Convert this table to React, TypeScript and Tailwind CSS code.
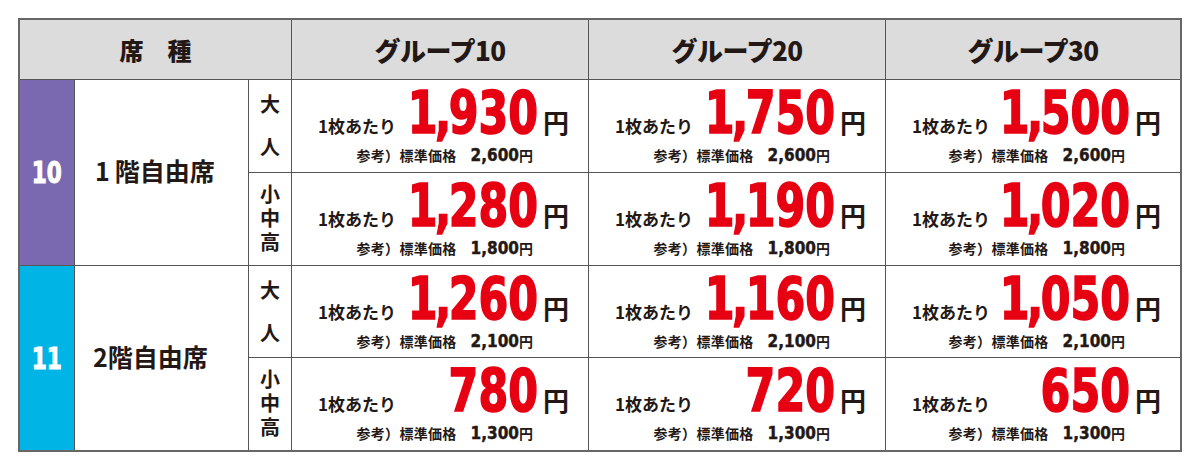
const JP = '"Noto Sans CJK JP", "Noto Sans", sans-serif';
const NUM = '"DejaVu Sans Condensed", "DejaVu Sans", sans-serif';

interface PriceCellProps {
  price: string;
  base: string;
}

function PriceCell({ price, base }: PriceCellProps) {
  const [head, tail] = price.includes(",") ? price.split(",") : ["", price];
  return (
    <div className="flex flex-col justify-center bg-white pb-[4px] text-[#231815]">
      <div className="flex items-baseline whitespace-nowrap pl-[26px] pr-[19px]">
        <span className="shrink-0 text-[17px] font-bold" style={{ fontFamily: JP }}>
          1枚あたり
        </span>
        <span className="flex min-w-0 flex-1 justify-end">
          <span
            className="inline-block origin-right scale-x-[0.82] text-[58px] font-bold leading-none text-[#e60012] [-webkit-text-stroke:1.5px_#e60012]"
            style={{ fontFamily: NUM }}
          >
            {head}
            {head && <span className="-mx-[3px]">,</span>}
            {tail}
          </span>
        </span>
        <span className="ml-[5px] shrink-0 text-[26px] font-bold leading-none" style={{ fontFamily: JP }}>
          円
        </span>
      </div>
      <div className="mt-[4px] flex items-baseline justify-end whitespace-nowrap pr-[55px] leading-[18px]">
        <span className="text-[14px] font-bold tracking-[0.3px]" style={{ fontFamily: JP }}>
          参考）標準価格
        </span>
        <span
          className="ml-[14px] text-[17px] font-bold [-webkit-text-stroke:0.4px_#231815]"
          style={{ fontFamily: NUM }}
        >
          {base}
        </span>
        <span className="text-[14px] font-bold" style={{ fontFamily: JP }}>
          円
        </span>
      </div>
    </div>
  );
}

const rows = [
  { cat: ["大", "人"], prices: ["1,930", "1,750", "1,500"], base: "2,600" },
  { cat: ["小", "中", "高"], prices: ["1,280", "1,190", "1,020"], base: "1,800" },
  { cat: ["大", "人"], prices: ["1,260", "1,160", "1,050"], base: "2,100" },
  { cat: ["小", "中", "高"], prices: ["780", "720", "650"], base: "1,300" },
];

function CategoryCell({ chars }: { chars: string[] }) {
  const two = chars.length === 2;
  return (
    <div
      className={`flex flex-col items-center justify-center bg-white pb-[2px] text-[20px] font-bold text-[#231815] ${
        two ? "gap-[22px] leading-[21px]" : "leading-[24px]"
      }`}
      style={{ fontFamily: JP }}
    >
      {chars.map((c, i) => (
        <span key={i}>{c}</span>
      ))}
    </div>
  );
}

function SeatNo({ no, color }: { no: string; color: string }) {
  return (
    <div className={`row-span-2 flex items-center justify-center ${color}`}>
      <span
        className="inline-block scale-x-[0.8] text-[30px] font-bold text-white [-webkit-text-stroke:1px_#ffffff]"
        style={{ fontFamily: NUM }}
      >
        {no}
      </span>
    </div>
  );
}

export default function App() {
  return (
    <div className="h-[469px] w-[1200px] bg-white pl-[18px] pt-[18px]">
      <div className="grid w-[1164px] grid-cols-[54px_173px_42px_296px_296px_294px] grid-rows-[59px_92px_92px_91px_92px] gap-px border-2 border-[#666666] bg-[#555555]">
        {/* header */}
        <div
          className="col-span-3 flex items-center justify-center bg-[#dcdcdc] text-[24px] font-black text-[#231815]"
          style={{ fontFamily: JP }}
        >
          席　種
        </div>
        {["グループ10", "グループ20", "グループ30"].map((g) => (
          <div
            key={g}
            className="flex items-center justify-center bg-[#dcdcdc] text-[26px] font-black tracking-[-0.5px] text-[#231815]"
            style={{ fontFamily: JP }}
          >
            {g}
          </div>
        ))}

        {/* seat 10 */}
        <SeatNo no="10" color="bg-[#7a69b0]" />
        <div
          className="row-span-2 flex items-center bg-white pb-[3px] pl-[20px] text-[25px] font-bold text-[#231815]"
          style={{ fontFamily: JP }}
        >
          1&thinsp;階自由席
        </div>
        <CategoryCell chars={rows[0].cat} />
        {rows[0].prices.map((p) => (
          <PriceCell key={p} price={p} base={rows[0].base} />
        ))}
        <CategoryCell chars={rows[1].cat} />
        {rows[1].prices.map((p) => (
          <PriceCell key={p} price={p} base={rows[1].base} />
        ))}

        {/* seat 11 */}
        <SeatNo no="11" color="bg-[#00b4e6]" />
        <div
          className="row-span-2 flex items-center bg-white pb-[3px] pl-[18px] text-[25px] font-bold text-[#231815]"
          style={{ fontFamily: JP }}
        >
          2階自由席
        </div>
        <CategoryCell chars={rows[2].cat} />
        {rows[2].prices.map((p) => (
          <PriceCell key={p} price={p} base={rows[2].base} />
        ))}
        <CategoryCell chars={rows[3].cat} />
        {rows[3].prices.map((p) => (
          <PriceCell key={p} price={p} base={rows[3].base} />
        ))}
      </div>
    </div>
  );
}
